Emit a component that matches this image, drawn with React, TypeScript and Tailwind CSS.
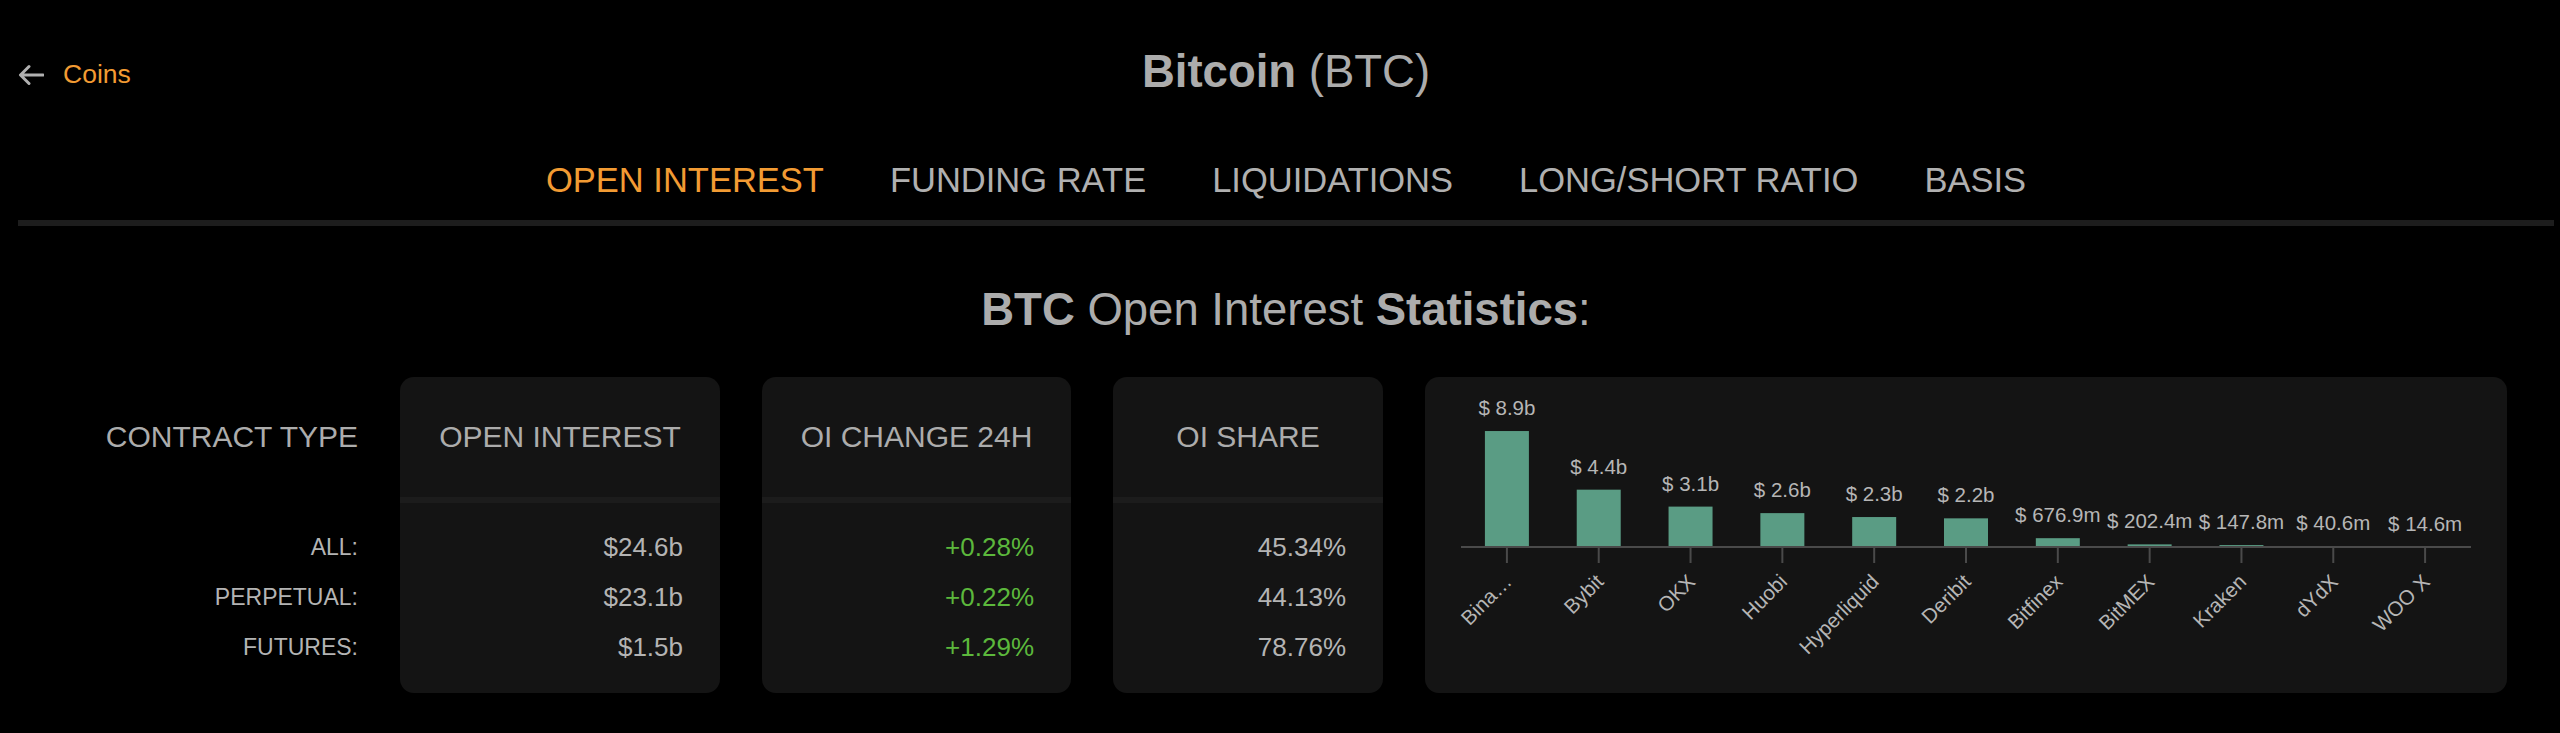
import React from "react";

type Row = {
  label: string;
  oi: string;
  change: string;
  share: string;
};

type Exchange = {
  name: string;
  value: number;
  text: string;
};

const rows: Row[] = [
  { label: "ALL:", oi: "$24.6b", change: "+0.28%", share: "45.34%" },
  { label: "PERPETUAL:", oi: "$23.1b", change: "+0.22%", share: "44.13%" },
  { label: "FUTURES:", oi: "$1.5b", change: "+1.29%", share: "78.76%" },
];

const exchanges: Exchange[] = [
  { name: "Bina…", value: 8.9, text: "$ 8.9b" },
  { name: "Bybit", value: 4.4, text: "$ 4.4b" },
  { name: "OKX", value: 3.1, text: "$ 3.1b" },
  { name: "Huobi", value: 2.6, text: "$ 2.6b" },
  { name: "Hyperliquid", value: 2.3, text: "$ 2.3b" },
  { name: "Deribit", value: 2.2, text: "$ 2.2b" },
  { name: "Bitfinex", value: 0.6769, text: "$ 676.9m" },
  { name: "BitMEX", value: 0.2024, text: "$ 202.4m" },
  { name: "Kraken", value: 0.1478, text: "$ 147.8m" },
  { name: "dYdX", value: 0.0406, text: "$ 40.6m" },
  { name: "WOO X", value: 0.0146, text: "$ 14.6m" },
];

const tabs = [
  "OPEN INTEREST",
  "FUNDING RATE",
  "LIQUIDATIONS",
  "LONG/SHORT RATIO",
  "BASIS",
];

function StatCard({
  title,
  values,
  width,
  green,
}: {
  title: string;
  values: string[];
  width: string;
  green?: boolean;
}) {
  return (
    <div className={`${width} h-[316px] shrink-0 rounded-[14px] bg-[#141414]`}>
      <div className="box-content flex h-[120px] items-center justify-center border-b-[6px] border-[#1c1c1c]">
        <span className="text-[30px] leading-none text-[#acacac]">{title}</span>
      </div>
      <div className="pt-[19px] pr-[37px]">
        {values.map((v) => (
          <div key={v} className="flex h-[50px] items-center justify-end">
            <span
              className={`text-[26px] leading-none ${
                green ? "text-[#5cb83c]" : "text-[#b4b4b4]"
              }`}
            >
              {v}
            </span>
          </div>
        ))}
      </div>
    </div>
  );
}

function ExchangeChart() {
  const axisY = 170;
  const left = 36;
  const right = 1046;
  const band = (right - left) / exchanges.length;
  const scale = 13.03;

  return (
    <div className="h-[316px] w-[1082px] shrink-0 rounded-[14px] bg-[#141414]">
      <svg width={1082} height={316} className="block">
        {exchanges.map((ex, i) => {
          const cx = left + band * (i + 0.5);
          const h = ex.value * scale;
          return (
            <g key={ex.name}>
              <rect x={cx - 22} y={axisY - h} width={44} height={h} fill="#5a9c84" />
              <text
                x={cx}
                y={axisY - h - 16}
                textAnchor="middle"
                fontSize={20.5}
                fill="#b6b6b6"
                fontFamily="'Liberation Sans', Arial, sans-serif"
              >
                {ex.text}
              </text>
              <line x1={cx} y1={axisY} x2={cx} y2={186} stroke="#4a4a4a" strokeWidth={2} />
              <text
                x={cx + 6}
                y={206}
                textAnchor="end"
                fontSize={20.5}
                fill="#b6b6b6"
                fontFamily="'Liberation Sans', Arial, sans-serif"
                transform={`rotate(-45 ${cx + 6} 206)`}
              >
                {ex.name}
              </text>
            </g>
          );
        })}
        <line x1={left} y1={axisY} x2={right} y2={axisY} stroke="#4a4a4a" strokeWidth={2} />
      </svg>
    </div>
  );
}

export default function App() {
  return (
    <div className="h-[733px] overflow-hidden bg-black pt-[46px] pl-[18px] pr-[6px] font-['Liberation_Sans',Arial,sans-serif] text-[#acacac]">
      {/* Header */}
      <div className="grid h-[52px] grid-cols-[1fr_auto_1fr] items-center">
        <a href="#" className="flex items-center gap-[19px] pt-[5px]">
          <svg width="26" height="22" viewBox="0 0 26 22" fill="none">
            <path
              d="M25 11H3M11 2.5L2.5 11L11 19.5"
              stroke="#b0b0b0"
              strokeWidth="3"
              strokeLinecap="round"
              strokeLinejoin="round"
            />
          </svg>
          <span className="text-[26.5px] leading-none text-[#f29b33]">Coins</span>
        </a>
        <h1 className="text-[45.5px] leading-none">
          <span className="font-bold">Bitcoin</span> (BTC)
        </h1>
        <div />
      </div>

      {/* Tabs */}
      <div className="mt-[62px] flex h-[40px] items-center justify-center gap-[66px]">
        {tabs.map((t, i) => (
          <span
            key={t}
            className={`text-[34.5px] leading-none ${
              i === 0 ? "text-[#f29b33]" : "text-[#b0b0b0]"
            }`}
          >
            {t}
          </span>
        ))}
      </div>

      <div className="mt-[20px] h-[6px] bg-[#1d1d1d]" />

      {/* Statistics title */}
      <div className="mt-[58px] flex h-[52px] items-center justify-center">
        <h2 className="text-[45.5px] leading-none">
          <span className="font-bold">BTC</span> Open Interest{" "}
          <span className="font-bold">Statistics</span>:
        </h2>
      </div>

      {/* Stats */}
      <div className="mt-[41px] flex gap-[42px]">
        <div className="h-[316px] w-[340px] shrink-0">
          <div className="flex h-[126px] items-center justify-end pb-[6px]">
            <span className="text-[30px] leading-none text-[#acacac]">CONTRACT TYPE</span>
          </div>
          <div className="pt-[19px]">
            {rows.map((r) => (
              <div key={r.label} className="flex h-[50px] items-center justify-end">
                <span className="text-[23px] leading-none text-[#b4b4b4]">{r.label}</span>
              </div>
            ))}
          </div>
        </div>

        <StatCard title="OPEN INTEREST" values={rows.map((r) => r.oi)} width="w-[320px]" />
        <StatCard
          title="OI CHANGE 24H"
          values={rows.map((r) => r.change)}
          width="w-[309px]"
          green
        />
        <StatCard title="OI SHARE" values={rows.map((r) => r.share)} width="w-[270px]" />
        <ExchangeChart />
      </div>
    </div>
  );
}
